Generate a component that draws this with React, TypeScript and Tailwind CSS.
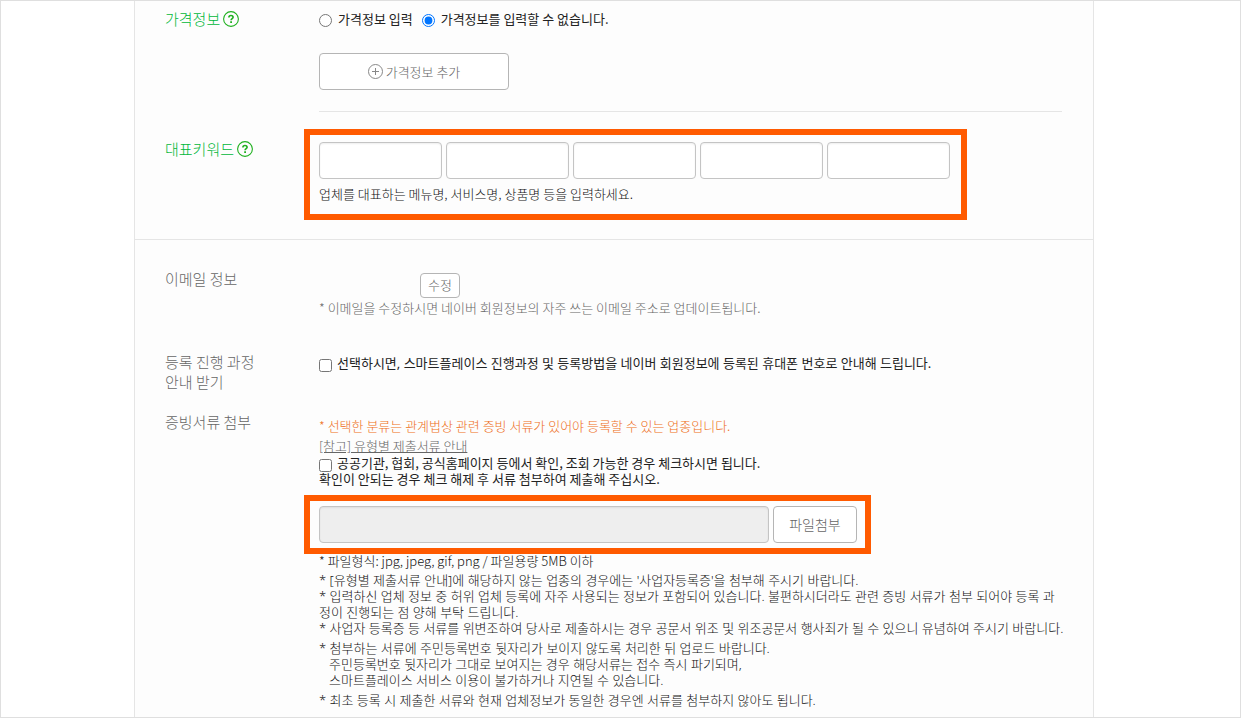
import type { ReactNode } from "react";

function HelpButton({ label }: { label: string }) {
  return (
    <button type="button" aria-label={label} className="shrink-0 cursor-pointer">
      <svg width="16" height="16" viewBox="0 0 16 16" fill="none" stroke="#1fb01f">
        <circle cx="8" cy="8" r="7.4" strokeWidth="1.1" />
        <path d="M5.9 6.5C5.9 5.2 6.7 4.5 8 4.5s2.1.7 2.1 1.7c0 1.3-2 1.4-2 3" strokeWidth="1.6" />
        <path d="M7.2 11.2h1.8" strokeWidth="1.7" />
      </svg>
    </button>
  );
}

function Row({ label, className, children }: { label: ReactNode; className: string; children: ReactNode }) {
  return (
    <div className={`flex ${className}`}>
      <div className="w-[154px] shrink-0 text-[15px] leading-5 text-[#666]">{label}</div>
      <div className="min-w-0 flex-1">{children}</div>
    </div>
  );
}

const fieldClass = "h-[37px] rounded border border-[#c4c4c4] px-2 shadow-[inset_0_1px_2px_rgba(0,0,0,0.07)]";
const buttonClass = "cursor-pointer border border-[#b5b5b5] bg-white text-[#666]";
const wideFont = "font-['Noto_Sans','Noto_Sans_CJK_KR',sans-serif]";

export default function App() {
  return (
    <div className="border border-[#dfdfdf] bg-white font-['Noto_Sans_CJK_KR',sans-serif] text-[13px] leading-4 font-light text-[#111]">
      <main className="ml-[133px] max-w-[960px] border-x border-[#e5e5e5] bg-[#fdfdfd]">
        <section className="border-b border-[#e5e5e5] pt-2 pr-[31px] pb-[19px] pl-[30px]">
          <Row
            className=""
            label={
              <div className="flex items-center gap-[3px] text-[#00b83a]">
                가격정보
                <HelpButton label="가격정보 도움말" />
              </div>
            }
          >
            <div className="border-b border-[#e5e5e5] pb-[21px]">
              <div className="flex gap-[9px] leading-5 font-normal text-[#222]">
                <label className="flex items-center gap-1.5">
                  <input type="radio" name="price" className="mt-0.5 size-[13px]" />
                  가격정보 입력
                </label>
                <label className="flex items-center gap-1.5">
                  <input type="radio" name="price" defaultChecked className="mt-0.5 size-[13px]" />
                  가격정보를 입력할 수 없습니다.
                </label>
              </div>
              <button type="button" className={`${buttonClass} mt-6 flex h-[37px] w-[190px] items-center justify-center gap-[3px] rounded-sm`}>
                <svg width="15" height="15" viewBox="0 0 15 15" fill="none" stroke="#888">
                  <circle cx="7.5" cy="7.5" r="7" />
                  <path d="M7.5 4v7M4 7.5h7" />
                </svg>
                가격정보 추가
              </button>
            </div>
          </Row>
          <Row
            className=""
            label={
              <div className="flex items-center gap-[3px] pt-[27px] text-[#00b83a]">
                대표키워드
                <HelpButton label="대표키워드 도움말" />
              </div>
            }
          >
            <div className="mt-[17px] -ml-[15px] w-[663px] border-6 border-[#ff5a00] px-[9px] pt-[7px] pb-3">
              <div className="flex gap-1">
                {[1, 2, 3, 4, 5].map((n) => (
                  <input key={n} type="text" aria-label={`대표키워드 ${n}`} className={`${fieldClass} w-[123px] bg-white`} />
                ))}
              </div>
              <p className="mt-[7px]">업체를 대표하는 메뉴명, 서비스명, 상품명 등을 입력하세요.</p>
            </div>
          </Row>
        </section>

        <section className="pt-[29px] pr-[31px] pb-[9px] pl-[30px]">
          <Row className="" label="이메일 정보">
            <div className="pt-1 pl-[101px]">
              <button type="button" className={`${buttonClass} block h-[25px] w-10 rounded-sm pb-0.5`}>
                수정
              </button>
            </div>
            <p className="mt-0.5 text-[#666]">* 이메일을 수정하시면 네이버 회원정보의 자주 쓰는 이메일 주소로 업데이트됩니다.</p>
          </Row>
          <Row
            className="mt-9"
            label={
              <>
                등록 진행 과정
                <br />
                안내 받기
              </>
            }
          >
            <label className={`${wideFont} flex items-center gap-[5px] pt-px leading-5 font-normal text-[#222]`}>
              <input type="checkbox" className="mt-1 size-[13px]" />
              선택하시면, 스마트플레이스 진행과정 및 등록방법을 네이버 회원정보에 등록된 휴대폰 번호로 안내해 드립니다.
            </label>
          </Row>
          <Row className="mt-5" label="증빙서류 첨부">
            <p className="pt-1.5 text-[#ee6f22]">* 선택한 분류는 관계법상 관련 증빙 서류가 있어야 등록할 수 있는 업종입니다.</p>
            <p className="mt-1">
              <a href="#documents" className="text-[#666] underline">
                [참고] 유형별 제출서류 안내
              </a>
            </p>
            <div className="mt-px font-normal text-[#222]">
              <label className="flex h-4 items-center gap-[5px]">
                <input type="checkbox" className="mt-1 size-[13px]" />
                공공기관, 협회, 공식홈페이지 등에서 확인, 조회 가능한 경우 체크하시면 됩니다.
              </label>
              <p>확인이 안되는 경우 체크 해제 후 서류 첨부하여 제출해 주십시오.</p>
            </div>
            <div className="mt-2 -ml-[15px] flex w-[567px] gap-1 border-6 border-[#ff5a00] py-[5px] pr-2 pl-[9px]">
              <input type="text" readOnly aria-label="첨부 파일 이름" className={`${fieldClass} min-w-0 flex-1 bg-[#eee]`} />
              <button type="button" className={`${buttonClass} h-[37px] w-[84px] rounded-sm pb-0.5 text-sm`}>
                파일첨부
              </button>
            </div>
            <p className="leading-[14px]">* 파일형식: jpg, jpeg, gif, png / 파일용량 5MB 이하</p>
            <div className={wideFont}>
              <div className="mt-1">
                <p>* [유형별 제출서류 안내]에 해당하지 않는 업종의 경우에는 '사업자등록증'을 첨부해 주시기 바랍니다.</p>
                <p className="whitespace-nowrap">
                  * 입력하신 업체 정보 중 허위 업체 등록에 자주 사용되는 정보가 포함되어 있습니다. 불편하시더라도 관련 증빙 서류가 첨부 되어야 등록 과
                  <br />
                  정이 진행되는 점 양해 부탁 드립니다.
                </p>
                <p className="whitespace-nowrap">
                  * 사업자 등록증 등 서류를 위변조하여 당사로 제출하시는 경우 공문서 위조 및 위조공문서 행사죄가 될 수 있으니 유념하여 주시기 바랍니다.
                </p>
              </div>
              <p className="mt-1">* 첨부하는 서류에 주민등록번호 뒷자리가 보이지 않도록 처리한 뒤 업로드 바랍니다.</p>
              <p className="pl-2.5">
                주민등록번호 뒷자리가 그대로 보여지는 경우 해당서류는 접수 즉시 파기되며,
                <br />
                스마트플레이스 서비스 이용이 불가하거나 지연될 수 있습니다.
              </p>
              <p className="mt-1">* 최초 등록 시 제출한 서류와 현재 업체정보가 동일한 경우엔 서류를 첨부하지 않아도 됩니다.</p>
            </div>
          </Row>
        </section>
      </main>
    </div>
  );
}
